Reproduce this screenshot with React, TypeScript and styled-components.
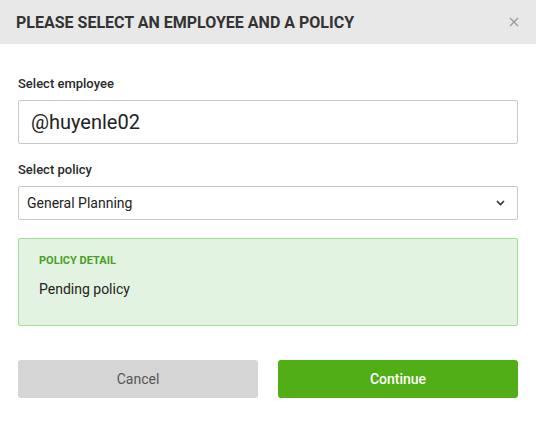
import React from "react";
import styled, { createGlobalStyle } from "styled-components";

const Global = createGlobalStyle`
  html, body { margin: 0; padding: 0; background: #fff; }
  body { font-family: Roboto, "Liberation Sans", Arial, sans-serif; }
  * { box-sizing: border-box; }
`;

const Dialog = styled.div`
  width: 536px;
  height: 425px;
  background: #fff;
  display: flex;
  flex-direction: column;
`;

const Header = styled.div`
  height: 44px;
  background: #e8e8e8;
  display: flex;
  align-items: center;
  justify-content: space-between;
  padding: 0 16px 0 16px;
`;

const Title = styled.h1`
  margin: 0;
  font-size: 16px;
  font-weight: 700;
  color: #333;
  text-transform: uppercase;
  letter-spacing: 0;
`;

const CloseButton = styled.button`
  border: 0;
  background: transparent;
  padding: 0;
  width: 12px;
  height: 12px;
  display: flex;
  align-items: center;
  justify-content: center;
  cursor: pointer;
`;

const Body = styled.div`
  padding: 32px 18px 0 18px;
  display: flex;
  flex-direction: column;
`;

const Label = styled.label<{ $top?: number }>`
  display: block;
  font-size: 13px;
  line-height: 16px;
  font-weight: 500;
  color: #2a2a2a;
  margin-top: ${(p) => p.$top ?? 0}px;
  margin-bottom: 8px;
`;

const TextInput = styled.div`
  height: 44px;
  border: 1px solid #c8c8c8;
  border-radius: 2px;
  display: flex;
  align-items: center;
  padding: 0 12px;
  font-size: 20px;
  color: #222;
`;

const SelectBox = styled.div`
  height: 34px;
  border: 1px solid #c8c8c8;
  border-radius: 2px;
  display: flex;
  align-items: center;
  justify-content: space-between;
  padding: 0 12px 0 8px;
  font-size: 14px;
  color: #222;
`;

const DetailBox = styled.div`
  margin-top: 18px;
  height: 88px;
  background: #e2f4e1;
  border: 1px solid #a3df98;
  border-radius: 2px;
  padding: 15px 20px;
  display: flex;
  flex-direction: column;
`;

const DetailTitle = styled.div`
  font-size: 11px;
  line-height: 14px;
  font-weight: 700;
  color: #4a9f24;
  text-transform: uppercase;
`;

const DetailText = styled.div`
  margin-top: 12px;
  font-size: 14px;
  line-height: 18px;
  color: #222;
`;

const Actions = styled.div`
  margin-top: 34px;
  display: grid;
  grid-template-columns: 1fr 1fr;
  gap: 20px;
`;

const Button = styled.button<{ $primary?: boolean }>`
  height: 38px;
  border: 0;
  border-radius: 3px;
  font-family: Roboto, "Liberation Sans", Arial, sans-serif;
  font-size: 14px;
  font-weight: ${(p) => (p.$primary ? 500 : 400)};
  background: ${(p) => (p.$primary ? "#52ae16" : "#d5d5d5")};
  color: ${(p) => (p.$primary ? "#fff" : "#555")};
  cursor: pointer;
`;

export default function App() {
  return (
    <>
      <Global />
      <Dialog>
        <Header>
          <Title>Please select an employee and a policy</Title>
          <CloseButton aria-label="Close">
            <svg width="10" height="10" viewBox="0 0 10 10">
              <path d="M1 1 L9 9 M9 1 L1 9" stroke="#9a9a9a" strokeWidth="1.3" />
            </svg>
          </CloseButton>
        </Header>
        <Body>
          <Label>Select employee</Label>
          <TextInput>@huyenle02</TextInput>
          <Label $top={18}>Select policy</Label>
          <SelectBox>
            <span>General Planning</span>
            <svg width="9" height="6" viewBox="0 0 9 6">
              <path d="M1 1 L4.5 4.5 L8 1" stroke="#333" strokeWidth="1.6" fill="none" />
            </svg>
          </SelectBox>
          <DetailBox>
            <DetailTitle>Policy detail</DetailTitle>
            <DetailText>Pending policy</DetailText>
          </DetailBox>
          <Actions>
            <Button>Cancel</Button>
            <Button $primary>Continue</Button>
          </Actions>
        </Body>
      </Dialog>
    </>
  );
}
